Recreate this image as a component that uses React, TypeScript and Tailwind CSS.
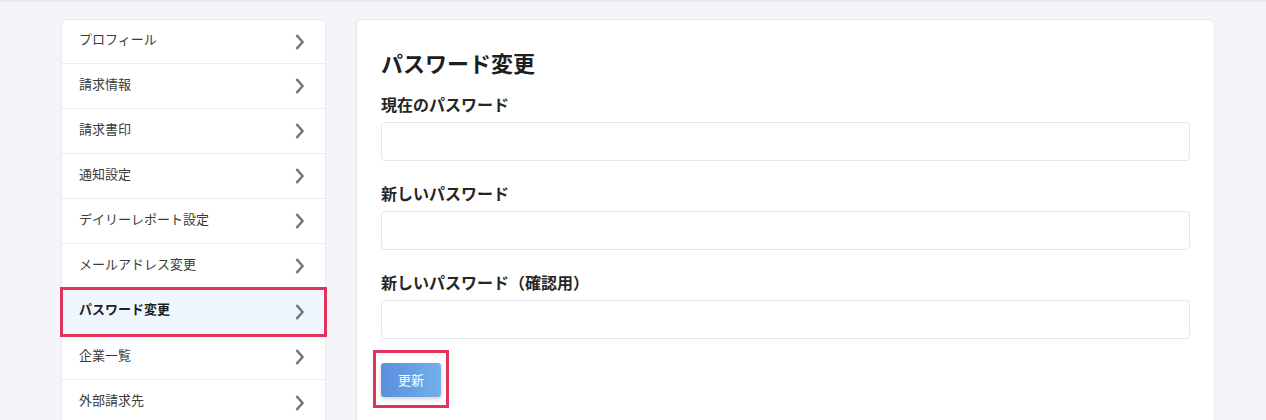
const menuItems = [
  "プロフィール",
  "請求情報",
  "請求書印",
  "通知設定",
  "デイリーレポート設定",
  "メールアドレス変更",
  "パスワード変更",
  "企業一覧",
  "外部請求先",
];

const ACTIVE = "パスワード変更";

function Chevron() {
  return (
    <svg width="10" height="16" viewBox="0 0 10 16" fill="none" aria-hidden="true">
      <path d="M2.2 1.8 L7.6 8 L2.2 14.2" stroke="#737a82" strokeWidth="2.6" strokeLinecap="round" strokeLinejoin="round" />
    </svg>
  );
}

function SideMenu() {
  return (
    <nav className="w-[265px] shrink-0 self-start rounded-[5px] border border-[#e6e8ec] bg-white">
      {menuItems.map((label, i) => {
        const active = label === ACTIVE;
        const height = i === 0 ? "h-[44px]" : "h-[45px]";
        return (
          <div
            key={label}
            className={
              active
                ? "relative flex h-[46px] items-center justify-between border-b border-[#ececee] bg-[#eff6fe] pl-[17px] pr-[20px] outline-[3px] outline-[#e0345a] -outline-offset-[1px]"
                : `flex ${height} items-center justify-between pl-[17px] pr-[20px] ${i < menuItems.length - 1 ? "border-b border-[#ececee]" : ""}`
            }
          >
            <span className={active ? "mb-[5px] text-[13px] font-bold text-[#1f1f1f]" : "mb-[5px] text-[13px] text-[#3a3a3a]"}>{label}</span>
            <Chevron />
          </div>
        );
      })}
    </nav>
  );
}

function Field({ label }: { label: string }) {
  return (
    <div className="flex flex-col gap-[7px]">
      <label className="text-[16px] font-bold leading-[22px] text-[#262626]">{label}</label>
      <input
        type="password"
        className="h-[39px] w-full rounded-[4px] border border-[#e5e7eb] bg-white px-3 text-[14px] outline-none"
      />
    </div>
  );
}

export default function App() {
  return (
    <div
      className="min-h-[420px] border-t-2 border-[#e8eaee] bg-[#f4f5f9] pt-[17px]"
      style={{ fontFamily: '"Noto Sans CJK JP", "Noto Sans", sans-serif' }}
    >
      <div className="flex gap-[30px] pl-[61px]">
        <SideMenu />
        <section className="h-[420px] w-[859px] shrink-0 rounded-[5px] border border-[#e6e8ec] bg-white px-[24px] pt-[26px]">
          <h2 className="mb-[15px] text-[22px] font-bold leading-[32px] text-[#1e1e1e]">パスワード変更</h2>
          <div className="flex flex-col gap-[21px]">
            <Field label="現在のパスワード" />
            <Field label="新しいパスワード" />
            <Field label="新しいパスワード（確認用）" />
          </div>
          <div className="-ml-[8px] mt-[11px] inline-block border-[3px] border-[#e0345a] px-[5px] pb-[8px] pt-[10px]">
            <button className="h-[34px] w-[60px] rounded-[3px] bg-gradient-to-r from-[#5a8edd] to-[#72b0ea] text-[13px] text-white shadow-[0_2px_4px_rgba(0,0,0,0.18)]">
              更新
            </button>
          </div>
        </section>
      </div>
    </div>
  );
}
